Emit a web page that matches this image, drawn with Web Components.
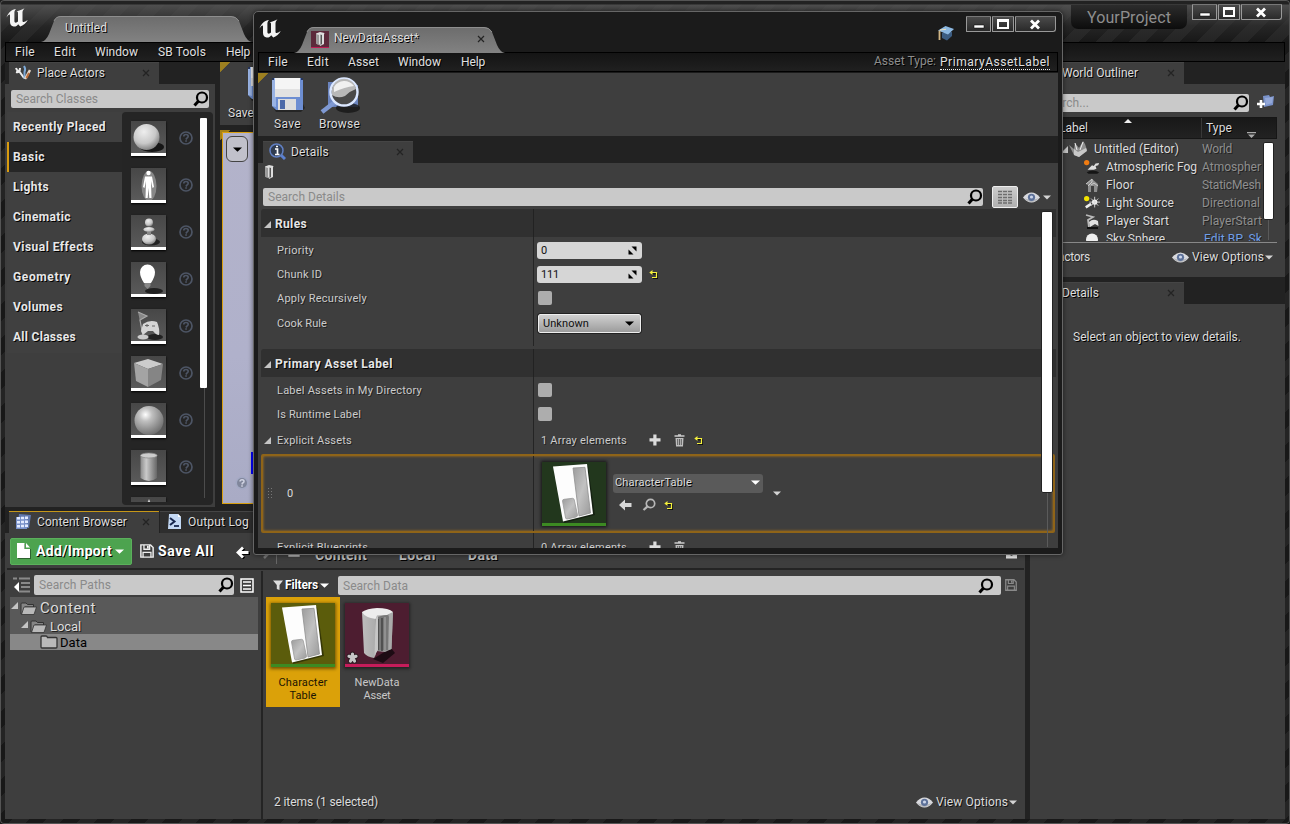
<!DOCTYPE html>
<html lang="en">
<head>
<meta charset="utf-8">
<title>Untitled</title>
<style>
html,body{margin:0;padding:0;background:#1c1c1c;overflow:hidden}
body{font:12px/14px Roboto,"Noto Sans",sans-serif;color:#dcdcdc;width:1290px;height:824px}
</style>
</head>
<body>
<ue-desktop></ue-desktop>
<script>
const floppy = (a, b) => `<path d="M1 1H12L15 4V15H1Z" fill="none" stroke="${a}" stroke-width="1.7"/><path d="M4.5 1V6H11V1M3.5 15V9.5H12.5V15" fill="none" stroke="${a}" stroke-width="1.5"/><path d="M8 2h2v3h-2z" fill="${b}"/>`;
const cabinet = `<path d="M1 1.500 5 0 9.500 1 9 2.500V12L5 14 4.500 12.500 1.500 12Z" fill="#ddd"/><path d="M1 2 4 3V13L1.500 12Z" fill="#9a9a9a"/><path d="M5.500 2.500 7 3V12L5.500 13Z" fill="#555"/>`;
const table = `<defs><linearGradient id="m" x2="1" y2="1"><stop offset="0" stop-color="#9c9c9c"/><stop offset=".5" stop-color="#c2c2c2"/><stop offset="1" stop-color="#9a9a9a"/></linearGradient></defs><path d="M13 6 46 4 53 53 22 61Z" fill="#000" opacity=".4"/><path d="M11 4.500 45 2 51 52 21 59.500Z" fill="#fdfdfd"/><path d="M31 6 43 5.300 48.500 51 37 54Z" fill="url(#m)" stroke="#8f8f8f" stroke-width=".8"/><path d="M20.500 39Q20.500 37.500 22 37.300L30.500 36.300Q32 36.300 32.300 38L35.500 53Q35.700 54.500 34 55L25.500 57Q24 57.300 23.600 56Z" fill="url(#m)" stroke="#9a9a9a" stroke-width=".8"/>`;
const star = 'M7.500 54.500V51M7.500 54.500 4 53.300M7.500 54.500 11 53.300M7.500 54.500 5.500 58M7.500 54.500 9.500 58';
const ICONS = {
logo:[23,20,`<path d="M.5 9.500C2 4.500 6 1.500 10 1 8.600 2.200 8.400 3.500 8.400 5V13C8.400 15 10.300 15.200 12 13.600V5C12 3.800 11.600 3.400 10.600 3.200 13.500 2.800 16 1.500 18.500.2 17 2 16.500 3 16.500 4.500V12.500C16.500 14.800 18.500 14.500 21.800 11.800 20.500 15 17 17.500 14.200 18.600L12.200 16.200C11 17.800 9.500 18.800 7.600 18.500 5.600 18.200 4 16.800 4 14V8C4 5.500 2.500 6.300.5 9.500Z" fill="#f4f4f4"/>`],
search:[16,16,`<circle cx="9" cy="6.500" r="5" fill="none" stroke="#000" stroke-width="2.200"/><path d="M5.500 10 1.500 14.500" stroke="#000" stroke-width="3"/>`],
searchLight:[14,14,`<circle cx="8.500" cy="5.500" r="4.200" fill="none" stroke="#b8b8b8" stroke-width="1.700"/><path d="M5.300 8.700 1.500 12" stroke="#b8b8b8" stroke-width="2.200"/>`],
x:[8,8,`<path d="M1 1 7 7M7 1 1 7" stroke="#232323" stroke-width="1.200"/>`],
tools:[16,16,`<path d="M1 3Q2 6 4 6L9 13M1 7Q5 8 5 3" stroke="#eee" stroke-width="2" fill="none"/><path d="M9 1Q11 4 9.500 7V14" stroke="#7eaad8" stroke-width="2" fill="none"/><path d="M15 5 10 14" stroke="#e8d8c8" stroke-width="2.500"/><path d="M14 8 11.500 13" stroke="#bd6c38" stroke-width="2"/>`],
help:[14,14,`<circle cx="7" cy="7" r="6" fill="none" stroke="#4d5565" stroke-width="1.700"/><path d="M4.800 5.500Q4.800 3.500 7 3.500 9.200 3.500 9.200 5.300 9.200 6.500 7.500 7.500L7 8.500" fill="none" stroke="#4d5565" stroke-width="1.700"/><path d="M6.200 9.300h1.700v1.500H6.200z" fill="#4d5565"/>`],
helpDisc:[14,14,`<circle cx="7" cy="7" r="6.500" fill="#a3a9c4"/><circle cx="7" cy="7" r="5" fill="#80869b"/><path d="M5 5.500Q5 3.800 7 3.800 9 3.800 9 5.400 9 6.500 7.300 7.300L7 8.500" fill="none" stroke="#d0d3e2" stroke-width="1.500"/><path d="M6.200 9.300h1.600v1.500H6.200z" fill="#d0d3e2"/>`],
down:[8,5,`<path d="M0 .5H8L4 4.500Z" fill="#d4d4d4"/>`],
downDark:[9,5,`<path d="M0 .5H9L4.500 4.800Z" fill="#000"/>`],
up:[8,4,`<path d="M0 4H8L4 0Z" fill="#eee"/>`],
sort:[9,7,`<path d="M0 0H9V1.300H0ZM1 2.500H8L4.500 6Z" fill="#aaa"/>`],
tri:[7,7,`<path d="M7 0V7H0Z" fill="#c4c4c4"/>`],
save32:[34,36,`<path d="M3 32 32 27 34 31 30 35H5Z" fill="#181818" opacity=".65"/><path d="M1 1H32V33H5L1 29Z" fill="#6d8ed2"/><path d="M1 1H5V30L1 29Z" fill="#99b3e4"/><path d="M4 1H29V20H4Z" fill="#f5f5f5"/><path d="M4 12H29V20H4Z" fill="#e2e2e2"/><path d="M7 22H25V33H7Z" fill="#ddd"/><path d="M9 23h5v9H9z" fill="#4c69a8"/><path d="M1 1H3V3H1ZM30 1h2v2h-2z" fill="#26365c"/>`],
browse:[40,38,`<path d="M8 5H20L22 8H38V30H8Z" fill="#6b84be"/><ellipse cx="28" cy="31" rx="12" ry="5" fill="#161616" opacity=".8"/><path d="M15 25 2 35" stroke="#7f99d2" stroke-width="4.500"/><circle cx="24" cy="15" r="13.500" fill="#494949" stroke="#dce8ff" stroke-width="2.400"/><path d="M12 16A12 12 0 0 1 36 12Q30 14 25 19 18 22 12 18Z" fill="#b8b8b8"/><path d="M14 10A12 12 0 0 1 34 9Q25 10 14 15Z" fill="#f0f0f0"/>`],
info:[17,17,`<path d="M10 10 16 16" stroke="#5b80cf" stroke-width="3"/><circle cx="7.500" cy="7.500" r="6.500" fill="#303c50" stroke="#607fc2" stroke-width="1.500"/><path d="M6 6H8.500V11M6 11.500H10.500M7 3.500H9" stroke="#fff" stroke-width="1.700" fill="none"/>`],
cabinet:[10,14,cabinet],
asset:[18,17,`<path d="M0 0H18V17H0Z" fill="#5c2a3b"/><g transform="translate(4 1)">${cabinet}</g><path d="M0 16H18V17.500H0Z" fill="#c01c55"/>`],
grid:[14,14,`<path d="M0 1.500H14M0 4.500H14M0 7.500H14M0 10.500H14M0 13H14" stroke="#6e6e6e" stroke-width="1.600"/><path d="M4.500 0V14M9.500 0V14" stroke="#bcbcbc"/>`],
eye:[17,11,`<path d="M0 5.500Q4 .5 8.500.5 13 .5 17 5.500 13 10.500 8.500 10.500 4 10.500 0 5.500Z" fill="#d9dade"/><path d="M1 6Q8 9 16 6 12 10 8.500 10 4 10 1 6" fill="#b4b6ba"/><circle cx="8.500" cy="5.300" r="3.600" fill="#5d7199"/><circle cx="8.500" cy="5" r="1.600" fill="#cbd5ea"/>`],
cap:[17,15,`<path d="M4 7V12L9 14.500 14 10V6Z" fill="#3c5d82"/><path d="M0 4.500 7.500 0 16 3 10 8.500Z" fill="#8db9e2"/><path d="M1.500 4.500V14" stroke="#d0b584" stroke-width="1.800"/><path d="M2 4 8 3.300" stroke="#e9dfc0"/>`],
spin:[9,9,`<path d="M3.500 .5H8.500V5.500Z" fill="#000"/><path d="M.5 3.500V8.500H5.500Z" fill="#000"/>`],
reset:[9,9,`<path d="M3 8H8V3H1" fill="none" stroke="#000" transform="translate(.8 .8)"/><path d="M3 7.500H7.500V2.500H1" fill="none" stroke="#f4f03c" stroke-width="1.200"/><path d="M3.500 0V5L.3 2.500Z" fill="#f4f03c"/>`],
plus:[12,12,`<path d="M4.300.5h3.200v3.800h4v3.200h-4v4H4.300v-4H.5V4.300h3.800z" fill="#dcdcdc"/>`],
trash:[11,13,`<path d="M.5 2H10.500M4 1H7" stroke="#ccc" stroke-width="1.500"/><path d="M1.500 4H9.500L9 12.500H2Z" fill="#bfbfbf"/><path d="M3.700 5V11M5.500 5V11M7.300 5V11" stroke="#444" stroke-width=".8"/>`],
back:[13,12,`<path d="M0 6 6 .5V4H12.500V8H6V11.500Z" fill="#d8d8d8"/>`],
backBold:[14,13,`<path d="M7 1.500 2 6.500 7 11.500M2 6.500H13.500" stroke="#000" stroke-width="3" fill="none" transform="translate(1 1)"/><path d="M7 1.500 2 6.500 7 11.500M2 6.500H12.500" stroke="#fff" stroke-width="2.800" fill="none"/>`],
fwd:[13,12,`<path d="M6 1 11 6 6 11M11 6H0" stroke="#777" stroke-width="2.500" fill="none"/>`],
cb:[16,16,`<path d="M4 0 16 1 14 14 2 15Z" fill="#6279ae"/><path d="M1 3H12V15H1Z" fill="#7890c8"/><path d="M2 3h3v2.500H2zM6 2.700h3v2.500H6zM10 2.400h3v2.500h-3zM2 7h3v2.500H2zM6 6.700h3v2.500H6zM10 6.400h3v2.500h-3zM2 11h3v2.500H2zM6 10.700h3v2.500H6zM10 10.400h3v2.500h-3z" fill="#e2eaff"/>`],
log:[15,16,`<path d="M2 0H11L14 3V15H1Z" fill="#c3d8f4"/><path d="M11 0V3H14Z" fill="#fff"/><path d="M3 4 7.500 7.500 3 11" stroke="#16264e" stroke-width="2" fill="none"/><path d="M7 12H12" stroke="#16264e" stroke-width="1.800"/>`],
file:[14,16,`<path d="M1 1H8V6H14V16H1Z" fill="#000" opacity=".4"/><path d="M0 0H7.500V6H13V15H0Z" fill="#fff"/><path d="M9 0 13 4.500H9Z" fill="#fff"/>`],
save:[16,16,floppy('#eee','#eee')], saveDim:[16,16,floppy('#8a8a8a','#8a8a8a')],
tree:[17,16,`<path d="M0 1.500H4M6 1.500H17M8 6H17M8 10H17M6 14.500H17" stroke="#8a8a8a" stroke-width="2.200"/><path d="M1 10 6 5V15Z" fill="#fff"/>`],
list:[14,15,`<path d="M1 1H13V14H1Z" fill="none" stroke="#fff" stroke-width="1.500"/><path d="M3 4H11M3 7.500H11M3 11H11" stroke="#fff" stroke-width="1.500"/>`],
folderOpen:[17,13,`<path d="M1 12V2Q1 1 2 1H6L7.500 2.500H13.500V5H5L2.500 12Z" fill="#858585" stroke="#333"/><path d="M4 5H16.500L14 12.500H1.500Z" fill="#b9b9b9" stroke="#333" stroke-width=".8"/>`],
folder:[18,14,`<path d="M1 2Q1 1 2 1H6Q7 1 7.500 2.500H16Q17 2.500 17 3.500V12Q17 13 16 13H2Q1 13 1 12Z" fill="#b9b9b9" stroke="#333" stroke-width="1.300"/>`],
filter:[10,11,`<path d="M0 .5H10L6.500 5V10L3.800 9V5Z" fill="#ddd"/>`],
downWhite:[9,5,`<path d="M0 .5H9L4.500 4.800Z" fill="#fff"/>`],
addActor:[17,16,`<path d="M6 2 12 1 13 3 17 2 16 11 7 13Z" fill="#7a92ca"/><path d="M8 4 16 3 15 9 9 11Z" fill="#94a8d8"/><path d="M4 6V14M0 10H8" stroke="#fff" stroke-width="2.600"/>`],
world:[19,17,`<path d="M0 4 5 8 6 2 10 7 14 0 16 3 18 9 10 16 5 14Z" fill="#8f8f8f"/><path d="M5 8 9 11 17 7 18 10 10 16 5 14Z" fill="#c8c8c8"/><path d="M6 2 8 9M14 1 11 9" stroke="#eee"/>`],
fog:[18,16,`<path d="M3 14Q10 10 17 14L15 15.500H5Z" fill="#151515"/><path d="M4 11 9 6 11 7 13 4 17 3.500 16 6 13 7 14 10 11 11Z" fill="#ddd"/><circle cx="3" cy="3" r="3" fill="#f07c12"/>`],
floor:[14,15,`<path d="M1 6 7 1 13 6 12 14H9V8H6V14H3V7Z" fill="#8e8e8e"/><path d="M1 6 7 1V4L3 8M6 7 9 5 13 8" stroke="#ccc" fill="none"/>`],
light:[18,16,`<path d="M2 13 8 9" stroke="#eee" stroke-width="3"/><circle cx="12" cy="7" r="3" fill="#fff"/><path d="M12 1V13M6 7H18M8 3 16 11M16 3 8 11" stroke="#ddd"/><circle cx="3" cy="3" r="3" fill="#f4e400"/>`],
player:[14,15,`<path d="M1 1 8 3 3 6 4 13" stroke="#b9b9b9" stroke-width="1.800" fill="none"/><path d="M4 8Q8 4 13 7L13.500 12 10 10 5 13Z" fill="#e1e1e1"/><path d="M2 14H13" stroke="#111" stroke-width="2"/>`],
ball:[13,13,`<circle cx="6.500" cy="6.500" r="6" fill="#eee"/>`],
lock:[12,12,`<path d="M0 0H12V12H0Z" fill="#e6e6e6"/><path d="M5 5h2v4H5z" fill="#333"/>`],
table:[64,64,`<path d="M0 0H64V64H0Z" fill="var(--tint,#22371d)"/>${table}<path d="M0 61H64V64H0Z" fill="#3c8a22"/>`],
pillar:[64,64,`<defs><linearGradient id="p"><stop offset="0" stop-color="#bdbdbd"/><stop offset=".6" stop-color="#a5a5a5"/><stop offset="1" stop-color="#8a8a8a"/></linearGradient></defs><path d="M0 0H64V64H0Z" fill="#4d1d30"/><path d="M28 56 46 45 50 50 38 60Z" fill="#1d0b13"/><path d="M17 9 48 9 46.500 46 40 49 32 48 31 50 29 55Q22 54 19 50Z" fill="url(#p)"/><path d="M30 15 42 11 44 14 43 47 31.500 48Z" fill="#777"/><path d="M33 16V47M37 15V48" stroke="#4a4a4a" stroke-width="1.700"/><path d="M40 14V47" stroke="#999" stroke-width="1.500"/><path d="M30.500 15 33 13V47L31 50 29.500 55Z" fill="#c6c6c6"/><path d="M44 11 48 9 46.500 46 43.500 47Z" fill="#aaa"/><path d="M17 9Q22 5.500 32 5 44 5 48 9L42 12 32 12.500 30.500 16Q20 14.500 17 9Z" fill="#ededed"/><path d="${star}" stroke="#2a1a20" stroke-width="5" stroke-linecap="round"/><path d="${star}" stroke="#c6c6c6" stroke-width="3.200" stroke-linecap="round"/><path d="M0 61H64V64H0Z" fill="#c61c5a"/>`]
};
const TH = {
sphere:`<ellipse cx="21" cy="26" rx="12" ry="5" fill="#161616"/><circle cx="15.500" cy="16" r="13" fill="url(#g)"/>`,
man:`<ellipse cx="18" cy="18" rx="7.500" ry="15" fill="#888"/><circle cx="17.500" cy="5" r="2.200" fill="#fff"/><path d="M14 8.500H21L23 19 21.500 20 20 13 20.500 30H18.300L17.500 20 16.700 30H14.500L15 13 13.500 20 12 19Z" fill="#fff"/>`,
pawn:`<ellipse cx="20" cy="27" rx="9" ry="3.500" fill="#222"/><ellipse cx="18" cy="24" rx="7" ry="5.500" fill="url(#g)"/><path d="M16 15H20V20H16Z" fill="#888"/><ellipse cx="18" cy="14.500" rx="5.500" ry="2.500" fill="url(#g)"/><circle cx="18" cy="7.500" r="4" fill="url(#g)"/>`,
bulb:`<ellipse cx="23" cy="29" rx="9" ry="3" fill="#202020"/><path d="M9 10A7.500 7.500 0 0 1 24 10Q24 15 20 21H13Q9 15 9 10Z" fill="#fff"/><path d="M13.500 21H19.500V24L16.500 27 13.500 24Z" fill="#888"/>`,
pad:`<ellipse cx="24" cy="28" rx="8" ry="3" fill="#222"/><path d="M7 3 16 7 9 11 12 27" stroke="#aaa" fill="#888" stroke-width="1.200"/><path d="M12 15Q19 10 26 13 29 20 28 26 25 26 22 22L17 22 12 26 10 22Z" fill="#d5d5d5"/><path d="M14 16.500H18M16 15V18M21 17H24" stroke="#666"/><ellipse cx="12" cy="28" rx="5.500" ry="2.500" fill="#ccc"/>`,
cube:`<path d="M3 7 17 3 32 8 17 13Z" fill="#ccc"/><path d="M3 7 17 13V31L5 25Z" fill="#a4a4a4"/><path d="M17 13 32 8 30 24 17 31Z" fill="#858585"/>`,
ball:`<circle cx="18" cy="17.500" r="14.500" fill="url(#h)"/>`,
cyl:`<path d="M9.500 5V28Q18 34 26 28V5Z" fill="url(#c)"/><ellipse cx="17.800" cy="5.500" rx="8.300" ry="2.500" fill="#ccc" stroke="#888" stroke-width=".7"/>`,
cone:`<path d="M18 2 30 30H6Z" fill="#ccc"/>`
};
const def = (name, css, html) => customElements.define(name, class extends HTMLElement {
  connectedCallback() {
    if (this.shadowRoot) return;
    const t = document.createElement('template');
    t.innerHTML = `<style>*{box-sizing:border-box}:host{box-sizing:border-box}${css}</style>` + (typeof html === 'function' ? html(this) : html);
    this.attachShadow({mode: 'open'}).append(t.content.cloneNode(true));
  }
});
const I = (n, st = '') => `<ue-icon n="${n}" style="${st}"></ue-icon>`;
const T = (s, w, st = '') => `<ue-text w="${w}" style="${st}">${s}</ue-text>`;
const SH = 'text-shadow:1px 1px 0 #000;';

def('ue-icon', ':host{display:block;flex:none}svg{display:block;width:100%;height:100%}', e => {
  const [w, h, s] = ICONS[e.getAttribute('n')];
  if (!e.style.width) e.style.width = w + 'px';
  if (!e.style.height) e.style.height = h + 'px';
  return `<svg viewBox="0 0 ${w} ${h}">${s}</svg>`;
});

def('ue-thumb', ':host{display:block;flex:none;width:35px;height:35px;background:linear-gradient(#474747,#5a5a5a);border-bottom:3px solid #fff;box-shadow:0 1px 2px #000}svg{display:block}', e =>
 `<svg width="35" height="32" viewBox="0 0 35 32"><defs><radialGradient id="g" cx=".4" cy=".3" r=".75"><stop offset="0" stop-color="#eee"/><stop offset=".6" stop-color="#c8c8c8"/><stop offset="1" stop-color="#777"/></radialGradient><radialGradient id="h" cx=".38" cy=".3" r=".75"><stop offset="0" stop-color="#fff"/><stop offset=".3" stop-color="#c0c0c0"/><stop offset="1" stop-color="#6a6a6a"/></radialGradient><linearGradient id="c"><stop offset="0" stop-color="#8b8b8b"/><stop offset=".35" stop-color="#cacaca"/><stop offset="1" stop-color="#666"/></linearGradient></defs>${TH[e.getAttribute('n')]}</svg>`);

def('ue-winbtns', `:host{display:flex;gap:1px;height:16px;flex:none}
i{display:flex;align-items:center;justify-content:center;border:1px solid #999;border-top-color:#777;background:linear-gradient(#4a4a4a,#2a2a2a);border-radius:1px}
i:nth-of-type(1){width:25px}i:nth-of-type(2){width:22px}i:nth-of-type(3){width:41px;border-bottom-right-radius:3px}svg{display:block}`,
`<i><svg width="12" height="10"><path d="M1 6H11V9H1Z" fill="#fff" stroke="#000" stroke-width=".5"/></svg></i><i><svg width="12" height="10"><path d="M1 1H11V9H1Z" fill="none" stroke="#fff" stroke-width="2"/><path d="M1 2H11" stroke="#fff" stroke-width="2"/></svg></i><i style="padding-right:2px"><svg width="12" height="11"><path d="M2 1.500 10 9.500M10 1.500 2 9.500" stroke="#fff" stroke-width="2.800"/></svg></i>`);

def('ue-doctab', `:host{display:block;flex:none;width:211px;height:26px;position:relative}svg{position:absolute;inset:0}div{position:relative;display:flex;align-items:center;height:24px;color:#dedede;text-shadow:1px 1px 0 #000}`,
`<svg width="211" height="26"><defs><linearGradient id="t" x2="0" y2="1"><stop offset="0" stop-color="#6c6c6c"/><stop offset="1" stop-color="#828282"/></linearGradient></defs><path d="M0 26Q5 25 8 18L13 5Q15 0 20 0H190Q195 0 198 5L203 18Q206 25 211 26Z" fill="url(#t)"/><path d="M13 5Q15 .5 20 .5H190Q195 .5 198 5" fill="none" stroke="#8e8e8e"/></svg><div><slot></slot></div>`);

def('ue-menubar', `:host{display:flex;height:20px;flex:none;align-items:center;background:linear-gradient(#141414,#202020);border:1px solid #000;color:#e0e0e0;text-shadow:1px 1px 0 #000}`, '<slot></slot>');

def('ue-tab', `:host{display:flex;flex:none;align-items:center;height:22px;width:150px;background:#3e3e3e;border-top:1px solid #454545;text-shadow:1px 1px 0 #000;color:#ddd;padding:0 9px 2px 0}span{flex:1}`,
 `<slot></slot><span></span>${I('x')}`);

def('ue-search', `:host{display:flex;align-items:center;height:18px;background:#c9c9c9;border-radius:2px;padding:0 0 0 5px;color:#8a8a8a;flex:none}span{flex:1}`,
 `<slot></slot><span></span>${I('search')}`);

def('ue-check', ':host{display:block;width:14px;height:14px;border-radius:2px;background:#adadad;flex:none}', '');
def('ue-num', ':host{display:flex;width:105px;height:17px;border-radius:3px;background:#d6d6d6;align-items:center;justify-content:space-between;padding:1px 5px 0 4px;color:#111;flex:none;text-shadow:none}', `<slot></slot>${I('spin','margin-top:-1px')}`);
def('ue-viewopts', ':host{display:flex;align-items:center;text-shadow:1px 1px 0 #111}', `${I('eye')}${T('View Options',72,'margin:0 1px 0 3px')}${I('down')}`);

def('ue-place-actors', `:host{display:flex;flex-direction:column;width:210px;flex:none;height:444px;background:#222}
.tabs{padding-left:4px;height:22px}.body{flex:1;background:#3e3e3e;padding:6px 2px 2px;display:flex;flex-direction:column}
.cols{display:flex;margin-top:4px;flex:1;min-height:0}.cats{width:115px;height:241px;background:#404040;font-weight:700}
.cat{height:30px;display:flex;align-items:center;padding-left:6px;text-shadow:1px 1px 0 #000;color:#e8e8e8}.sel{background:#262626;border-left:2px solid #d99c10;padding-left:4px}
.tray{flex:1;background:#252525;border-radius:4px;padding:6px 6px 3px 9px;display:flex;justify-content:space-between}
.list{display:grid;grid-auto-rows:35px;gap:12px;overflow:hidden;height:384px;padding:3px 2px 0 0}.r{display:flex;align-items:center;gap:13px}
.sb{width:7px;height:380px;background:linear-gradient(90deg,transparent 4px,#4c4c4c 4px 5px,transparent 5px)}.sb i{display:block;height:270px;background:#fff;border-radius:1px}`,
`<div class="tabs"><ue-tab>${I('tools','margin:0 6px 0 6px')}${T('Place Actors',68)}</ue-tab></div>
<div class="body"><ue-search style="margin:0 4px">${T('Search Classes',82)}</ue-search>
<div class="cols"><div class="cats">${[['Recently Placed',93],['Basic',32],['Lights',36],['Cinematic',58],['Visual Effects',81],['Geometry',58],['Volumes',50],['All Classes',63]].map(([c,w],i)=>`<div class="cat ${i==1?'sel':''}">${T(c,w)}</div>`).join('')}</div>
<div class="tray"><div class="list">${['sphere','man','pawn','bulb','pad','cube','ball','cyl','cone'].map(n=>`<div class="r"><ue-thumb n="${n}"></ue-thumb>${I('help','margin-top:-1px')}</div>`).join('')}</div><div class="sb"><i></i></div></div></div></div>`);

def('ue-viewport', `:host{display:flex;flex-direction:column;flex:1;min-width:0;height:444px}
.bar{height:63px;background:#3e3e3e linear-gradient(135deg,#9d8020 7px,transparent 7.500px);padding:4px 8px;flex:none}
.bar ue-icon{margin-left:19px}
.view{margin-top:5px;flex:1;background:linear-gradient(135deg,#a78117 7px,transparent 7.500px),#222;padding:2px 0 2px 2px}
.in{height:100%;border:1px solid #d9a010;background:linear-gradient(#b3b3ca,#b0b1cb 60%,#a9abc5);padding:3px;display:flex;flex-direction:column;justify-content:space-between}
.btn{width:22px;height:26px;border:1px solid #444;border-radius:6px;background:#c1c1cb;display:flex;align-items:center;justify-content:center;box-shadow:27px 0 0 -1px #bbb}
.axis{width:3px;height:22px;background:#00f;margin:0 0 -4px 25px}`,
`<div class="bar">${I('save32')}${T('Save',26,'margin-top:4px;'+SH)}</div><div class="view"><div class="in"><div class="btn">${I('downDark')}</div><div><div class="axis"></div>${I('helpDisc','margin:6px 0 10px 9px')}</div></div></div>`);

def('ue-content-browser', `:host{display:flex;flex-direction:column;height:308px;background:#3e3e3e}
.tabs{height:22px;background:#222;display:flex;gap:1px;padding-left:4px;flex:none}
.tools{height:36px;display:flex;align-items:center;padding-left:5px;flex:none}
.add{width:122px;height:27px;background:#4da34f;border:1px solid #5bb05c;border-radius:2px;display:flex;align-items:center;padding-left:6px;font-weight:700;font-size:14px;color:#fff}
.line{height:2px;background:#242424;margin:-1px 1px 1px 2px;flex:none}.main{flex:1;display:flex}
.paths{width:256px;flex:none;padding:4px 3px 0 5px}.row{display:flex;align-items:center}
.tree{margin-top:2px}.tree div{display:flex;align-items:center;background:#595959;height:17px;padding-top:2px;text-shadow:1px 1px 0 #222}
.split{width:2px;flex:none;background:#242424}.assets{flex:1;min-width:0;display:flex;flex-direction:column;padding:4px 7px 10px 3px}
.tiles{display:flex;flex:1;margin-top:2px}.tile{width:74px;height:110px;padding:6px 4px 0;display:flex;flex-direction:column;align-items:center;font-size:11px;line-height:13px;color:#c8c8c8}
.tile ue-icon{margin-bottom:9px;box-shadow:0 1px 3px 1px #0007}.foot{display:flex;justify-content:space-between;align-items:center;padding:0 1px 0 8px;text-shadow:1px 1px 0 #222}`,
`<div class="tabs"><ue-tab style="border-top:1px solid #c69718">${I('cb','margin:0 6px')}${T('Content Browser',90)}</ue-tab><ue-tab style="background:#2e2e2e">${I('log','margin:0 6px 0 7px')}${T('Output Log',61)}</ue-tab></div>
<div class="tools"><div class="add">${I('file','margin-right:5px')}${T('Add/Import',76,SH)}${I('downWhite','margin-left:3px')}</div>${I('save','width:14px;height:14px;margin:0 4px 0 8px')}${T('Save All',56,'font-weight:700;font-size:14px;color:#fff;'+SH)}${I('backBold','margin:2px 8px 0 22px')}${I('fwd','margin:4px 5px 0 0')}<span style="width:1px;height:26px;background:#666;margin:0 10px 0 0"></span>${I('folder','width:14px;height:11px;margin:3px 14px 0 0')}<span class="row" style="font-size:14px;margin-top:8px;color:#bbb;text-shadow:1px 1px 0 #000">${T('Content',52,'font-weight:700')}${T('Local',37,'margin:0 32px;font-weight:700')}${T('Data',30,'font-weight:700')}</span><span style="flex:1"></span>${I('lock','width:11px;height:12px;margin:3px 8px 0 0')}</div>
<div class="line"></div>
<div class="main"><div class="paths"><div class="row">${I('tree','margin:0 4px 0 3px')}<ue-search style="width:200px;height:20px">${T('Search Paths',72)}</ue-search>${I('list','margin-left:6px')}</div>
<div class="tree"><div style="height:20px;font-size:15px;margin-top:2px">${I('tri','margin:-6px 2px 0 1px')}${I('folderOpen','margin-right:3px')}${T('Content',56)}</div><div style="font-size:13px">${I('tri','margin:-5px 2px 0 11px')}${I('folderOpen','margin-right:3px')}${T('Local',31)}</div><div style="background:#888;color:#000;height:16px;font-size:13px;text-shadow:none">${I('folder','margin:-3px 2px 0 30px')}${T('Data',27)}</div></div></div>
<div class="split"></div><div class="assets"><div class="row" style="height:20px">${I('filter','margin:0 2px 0 7px')}${T('Filters',33,'font-weight:700;color:#fff;'+SH)}${I('downWhite','margin:0 9px 0 2px')}<ue-search style="width:663px;height:19px;margin-top:1px;padding-right:7px">${T('Search Data',65)}</ue-search>${I('saveDim','width:12px;height:12px;margin-left:4px')}</div>
<div class="tiles"><div class="tile" style="background:#dba109;color:#1c1503">${I('table','--tint:#5b5c0b')}${T('Character',49)}${T('Table',27)}</div><div class="tile">${I('pillar')}${T('NewData',45)}${T('Asset',27)}</div></div>
<div class="foot">${T('2 items (1 selected)',104)}<ue-viewopts></ue-viewopts></div></div></div>`);

def('ue-outliner', `:host{display:flex;flex-direction:column;height:215px;background:#3e3e3e}
.tabs{height:22px;background:#222;padding-left:4px;flex:none}.s{display:flex;align-items:center;padding:10px 8px 0 4px;height:28px}
.head{display:flex;height:22px;margin:5px 8px 0 4px;background:linear-gradient(#181818,#222);border:1px solid #161616;text-shadow:1px 1px 0 #000}
.head>div:first-child{width:167px;border-right:1px solid #383838;display:flex;gap:36px;padding:1px 0 0 24px}.head>div+div{flex:1;display:flex;padding:2px 20px 0 4px;justify-content:space-between}
.lst{height:102px;overflow:hidden;margin:0 8px 0 4px;display:flex}.rows{width:228px;flex:none;overflow:hidden;padding-top:1px}
.rows div{display:flex;align-items:center;height:18px;padding-left:46px;text-shadow:1px 1px 0 #222}.rows div>ue-text:last-child{color:#8f8f8f}
.n{flex:none;width:96px}
.sb{width:11px;flex:none;margin:3px 0 0 1px;height:98px;background:linear-gradient(90deg,transparent 5px,#5a5a5a 5px 6px,transparent 6px)}.sb i{display:block;height:78px;background:#fff;border:1px solid #222;border-radius:2px}
.foot{margin:1px 8px 0 4px;border-top:1px solid #888;display:flex;justify-content:space-between;padding:7px 3px 0 15px;text-shadow:1px 1px 0 #222}`,
`<div class="tabs"><ue-tab>${T('World Outliner',76,'margin-left:28px')}</ue-tab></div>
<div class="s"><ue-search style="width:215px">${T('Search...',47,'margin-left:3px')}</ue-search>${I('addActor','margin:-2px 0 0 8px')}</div>
<div class="head"><div>${T('Label',29,'margin-top:2px')}${I('up')}</div><div>${T('Type',26,'margin-top:1px')}${I('sort','margin-top:12px')}</div></div>
<div class="lst"><div class="rows"><div style="padding-left:27px">${I('tri','margin-right:1px')}${I('world','margin-right:6px')}<span style="width:108px">${T('Untitled (Editor)',85)}</span>${T('World',30)}</div>
${[['fog','Atmospheric Fog',91,'Atmospher',59],['floor','Floor',28,'StaticMesh',59],['light','Light Source',68,'Directional',58],['player','Player Start',63,'PlayerStart',60],['ball','Sky Sphere',59,'Edit BP_Sk',58]].map(([i,a,w,b,v],k)=>`<div><span style="width:26px;flex:none;display:flex;justify-content:center;padding-right:2px">${I(i,'width:16px')}</span><span class="n">${T(a,w)}</span>${T(b,v,k==4?'color:#6f9ee8;margin-left:2px':'')}</div>`).join('')}</div><div class="sb"><i></i></div></div>
<div class="foot">${T('6 actors',41)}<ue-viewopts style="margin-right:1px"></ue-viewopts></div>`);

def('ue-details-empty', `:host{display:flex;flex-direction:column;flex:1;background:#3e3e3e}.tabs{height:22px;background:#222;padding-left:4px}.m{display:flex;justify-content:center;padding:26px 1px 0 0}`,
`<div class="tabs"><ue-tab>${T('Details',37,'margin-left:28px')}</ue-tab></div><div class="m">${T('Select an object to view details.',168,SH)}</div>`);

def('ue-cat', `:host{display:flex;align-items:center;height:28px;background:#303030;font-weight:700;color:#e6e6e6;border-radius:3px 0 0 0;flex:none}
.a{width:272px;display:flex;align-items:center;padding:2px 0 0 3px;gap:4px;text-shadow:1px 1px 0 #000}.b{width:1px;background:#222;height:100%}`, `<div class="a">${I('tri')}<slot></slot></div><div class="b"></div>`);
def('ue-prop', `:host{display:flex;flex:none;font-size:11px;color:#ccc;text-shadow:1px 1px 0 #222}
.a{width:272px;display:flex;align-items:center;padding:2px 0 0 16px}.v{width:1px;background:#242424}.b{display:flex;align-items:center;padding-left:3px}`,
`<div class="a"><slot name="k"></slot></div><div class="v"></div><div class="b"><slot></slot></div>`);

def('ue-asset-window', `:host{display:flex;flex-direction:column;width:810px;height:544px;border:1px solid #666;border-radius:5px 5px 3px 3px;background:#1b1b1b;padding:0 4px 6px;box-shadow:0 0 5px #0008;overflow:hidden}
.title{display:flex;height:40px;padding:3px 2px 0 1px;flex:none}
.tb{height:63px;background:#3e3e3e linear-gradient(135deg,#9d8020 7px,transparent 7.500px);margin:1px 0 0 0;display:flex;padding:4px 0 0 12px;flex:none;text-shadow:1px 1px 0 #000}
.tb div{display:flex;flex-direction:column;align-items:center;justify-content:space-between;height:54px}
.tabs{height:27px;background:#222;padding:5px 0 0 5px;flex:none}
.body{flex:1;min-height:0;background:#3e3e3e;display:flex;flex-direction:column;padding:2px 2px 0 3px}
.s{display:flex;align-items:center;height:24px;padding-left:2px;margin-top:6px}
.gb{width:26px;height:22px;border:1px solid #eee;background:linear-gradient(#ccc,#b0b0b0);border-radius:2px;display:flex;align-items:center;justify-content:center;margin:0 5px 0 9px}
.list{position:relative;flex:1;min-height:0;overflow:hidden;display:flex;flex-direction:column}
.sb{position:absolute;right:3px;top:2px;width:12px;height:336px;background:linear-gradient(90deg,transparent 6px,#5b5b5b 6px 7px,transparent 7px)}.sb i{display:block;height:282px;background:#fff;border:1px solid #222;border-radius:2px}
.item{border:2px solid #8f6418;box-shadow:inset 0 0 3px #b0781a;border-radius:2px;height:79px;margin-right:1px;flex:none;display:flex;align-items:stretch}
.item .a{width:270px;display:flex;align-items:center;padding-left:4px;font-size:11px}.item .b{border-left:1px solid #242424;display:flex;padding:6px 0 0 8px}
.dots{width:5px;height:13px;background:radial-gradient(#777 .7px,transparent 1px) 0 0/3px 3px}
.combo{width:150px;height:19px;background:#5a5a5a;border-radius:3px;display:flex;align-items:center;justify-content:space-between;padding:0 3px 2px 2px;font-size:11px;text-shadow:1px 1px 0 #000}
.dd{width:103px;height:19px;border:1px solid #eee;outline:1px solid #222;background:linear-gradient(#d0d0d0,#9c9c9c);border-radius:2px;display:flex;align-items:center;justify-content:space-between;padding:1px 6px 0 4px;color:#111;text-shadow:none;margin:1px 0 0 1px}`,
`<div class="title">${I('logo','margin-top:4px')}<ue-doctab style="margin:12px 0 0 12px">${I('asset','margin:0 0 0 17px')}${T('NewDataAsset*',85,'margin:-2px 0 0 5px')}${I('x','margin-left:58px')}</ue-doctab><span style="flex:1"></span>${I('cap','margin:11px 11px 0 0')}<ue-winbtns style="margin-top:1px"></ue-winbtns></div>
<ue-menubar style="padding-left:9px">${T('File',20)}${T('Edit',22,'margin-left:19px')}${T('Asset',31,'margin-left:19px')}${T('Window',43,'margin-left:19px')}${T('Help',24,'margin-left:20px')}<span style="flex:1"></span>${T('Asset Type:',62,'color:#8d8d8d;margin-top:-2px')}${T('PrimaryAssetLabel',110,'margin:0 7px 0 4px;border-bottom:1px dotted #eee;height:15px')}</ue-menubar>
<div class="tb"><div>${I('save32','margin-left:1px')}${T('Save',27)}</div><div style="margin-left:14px">${I('browse')}${T('Browse',41)}</div></div>
<div class="tabs"><ue-tab>${I('info','margin:0 5px 0 6px')}${T('Details',38)}</ue-tab></div>
<div class="body">${I('cabinet','margin-left:3px')}<div class="s" style="flex:none"><ue-search style="width:720px">${T('Search Details',77)}</ue-search><div class="gb">${I('grid')}</div>${I('eye')}${I('down','margin-left:3px')}</div>
<div class="list"><ue-cat>${T('Rules',32)}</ue-cat>
<ue-prop style="height:25px"><ue-text slot="k" w="37">Priority</ue-text><ue-num style="margin-top:2px">${T('0',7)}</ue-num></ue-prop>
<ue-prop style="height:24px"><ue-text slot="k" w="45">Chunk ID</ue-text><ue-num>${T('111',18)}</ue-num>${I('reset','margin-left:7px')}</ue-prop>
<ue-prop style="height:24px"><ue-text slot="k" w="90">Apply Recursively</ue-text><ue-check style="margin-left:1px"></ue-check></ue-prop>
<ue-prop style="height:25px"><ue-text slot="k" w="50">Cook Rule</ue-text><div class="dd">${T('Unknown',46)}${I('downDark')}</div></ue-prop>
<ue-prop style="height:11px"></ue-prop><div style="height:3px;flex:none"></div>
<ue-cat>${T('Primary Asset Label',118)}</ue-cat>
<ue-prop style="height:25px"><ue-text slot="k" w="145">Label Assets in My Directory</ue-text><ue-check style="margin-left:1px"></ue-check></ue-prop>
<ue-prop style="height:24px"><ue-text slot="k" w="84">Is Runtime Label</ue-text><ue-check style="margin-left:1px"></ue-check></ue-prop>
<ue-prop style="height:28px"><div slot="k" style="display:flex;align-items:center;margin-left:-13px">${I('tri','margin:-2px 6px 0 0')}${T('Explicit Assets',75)}</div>${T('1 Array elements',86,'margin:2px 22px 0 4px')}${I('plus')}${I('trash','margin:0 9px 0 13px')}${I('reset')}</ue-prop>
<div class="item"><div class="a"><span class="dots"></span>${T('0',7,'margin:1px 0 0 15px')}</div><div class="b">${I('table','box-shadow:0 0 3px 1px #000a')}<div style="margin:12px 0 0 7px"><div class="combo">${T('CharacterTable',77)}${I('downWhite')}</div><div style="display:flex;align-items:center;margin:5px 0 0 6px">${I('back')}${I('searchLight','margin:0 8px 0 10px')}${I('reset')}</div></div>${I('down','margin:29px 0 0 10px')}</div></div>
<ue-prop style="height:28px"><ue-text slot="k" w="91">Explicit Blueprints</ue-text>${T('0 Array elements',86,'margin:2px 22px 0 4px')}${I('plus')}${I('trash','margin:0 0 0 13px')}</ue-prop>
<div class="sb"><i></i></div></div></div>`);

def('ue-desktop', `:host{display:flex;flex-direction:column;width:1290px;height:824px;position:relative;overflow:hidden;padding:0 5px;
background:linear-gradient(#222 0 4px,#5a5a5acc 5px,#33333380 26px,transparent 42px),repeating-linear-gradient(135deg,#181818 0 12px,#242424 12px 24px);box-shadow:inset 0 0 0 1px #555;border-radius:4px}
.title{display:flex;height:42px;flex:none;padding:4px 3px 0 1px}
.proj{width:116px;height:24px;background:linear-gradient(#2c2c2c,#0c0c0c);border-radius:0 0 7px 7px;display:flex;justify-content:center;align-items:center;font-size:16px;line-height:19px;color:#8e8e8e;margin:1px 5px 0 0}
.main{display:flex;gap:5px;height:757px;background:#222}.l{width:1020px;flex:none;display:flex;flex-direction:column;gap:5px}.r{flex:1;min-width:0;display:flex;flex-direction:column;gap:5px}.top{display:flex;gap:5px}
ue-asset-window{position:absolute;left:253px;top:11px}`,
`<div class="title">${I('logo','margin-top:4px')}<ue-doctab style="margin:12px 0 0 12px">${T('Untitled',42,'margin-left:24px')}</ue-doctab><span style="flex:1"></span><div class="proj">${T('YourProject',84)}</div><ue-winbtns></ue-winbtns></div>
<ue-menubar style="padding-left:9px">${T('File',20)}${T('Edit',22,'margin-left:19px')}${T('Window',43,'margin-left:19px')}${T('SB Tools',48,'margin-left:20px')}${T('Help',24,'margin-left:20px')}</ue-menubar>
<div class="main"><div class="l"><div class="top"><ue-place-actors></ue-place-actors><ue-viewport></ue-viewport></div><ue-content-browser></ue-content-browser></div>
<div class="r"><ue-outliner></ue-outliner><ue-details-empty></ue-details-empty></div></div>
<ue-asset-window></ue-asset-window>`);

/* Label whose tracking is adjusted so that it fills the width given by "w". */
customElements.define('ue-text', class extends HTMLElement {
  connectedCallback() {
    if (this.shadowRoot) return;
    this.attachShadow({mode: 'open'}).innerHTML = '<style>:host{display:block;flex:none;white-space:pre}span{display:inline-block}</style><span><slot></slot></span>';
    const w = +this.getAttribute('w'), s = this.shadowRoot.querySelector('span');
    const n = this.textContent.length, nat = s.getBoundingClientRect().width;
    this.style.width = w + 'px';
    if (nat) s.style.letterSpacing = ((w - nat) / n).toFixed(3) + 'px';
  }
});
</script>
</body>
</html>
